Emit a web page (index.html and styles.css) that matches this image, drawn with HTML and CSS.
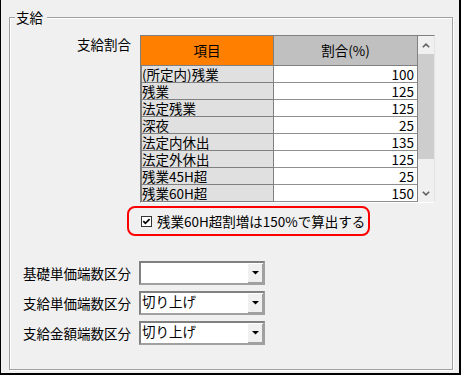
FILE: index.html
```html
<!DOCTYPE html>
<html lang="ja">
<head>
<meta charset="utf-8">
<title>支給</title>
<link rel="stylesheet" href="styles.css">
</head>
<body>
<div class="window">
  <div class="group">
    <div class="legend">支給</div>
    <div class="rate-row">
      <div class="rate-label">支給割合</div>
      <div class="tablebox">
        <div class="grid">
          <div class="row head">
            <div class="c1">項目</div>
            <div class="c2">割合(%)</div>
          </div>
          <div class="row"><div class="c1">(所定内)残業</div><div class="c2">100</div></div>
          <div class="row"><div class="c1">残業</div><div class="c2">125</div></div>
          <div class="row"><div class="c1">法定残業</div><div class="c2">125</div></div>
          <div class="row"><div class="c1">深夜</div><div class="c2">25</div></div>
          <div class="row"><div class="c1">法定内休出</div><div class="c2">135</div></div>
          <div class="row"><div class="c1">法定外休出</div><div class="c2">125</div></div>
          <div class="row"><div class="c1">残業45H超</div><div class="c2">25</div></div>
          <div class="row"><div class="c1">残業60H超</div><div class="c2">150</div></div>
        </div>
        <div class="vscroll">
          <div class="arrow"><svg width="8" height="5" viewBox="0 0 8 5"><polyline points="0.8,4.3 4,1.2 7.2,4.3" fill="none" stroke="#606060" stroke-width="1.6"/></svg></div>
          <div class="thumb"></div>
          <div class="track"></div>
          <div class="arrow"><svg width="8" height="5" viewBox="0 0 8 5"><polyline points="0.8,0.7 4,3.8 7.2,0.7" fill="none" stroke="#606060" stroke-width="1.6"/></svg></div>
        </div>
      </div>
    </div>
    <div class="chk">
      <span class="box"><svg width="9" height="9" viewBox="0 0 9 9"><polyline points="1.3,4.2 3.4,6.4 7.6,2.1" fill="none" stroke="#000" stroke-width="1.7"/></svg></span>
      <span class="chk-text">残業60H超割増は150%で算出する</span>
    </div>
    <div class="fields">
      <div class="field">
        <div class="lbl">基礎単価端数区分</div>
        <div class="combo"><div class="val"></div><div class="btn"><svg width="7" height="4" viewBox="0 0 7 4"><polygon points="0,0 7,0 3.5,3.6" fill="#000"/></svg></div></div>
      </div>
      <div class="field">
        <div class="lbl">支給単価端数区分</div>
        <div class="combo"><div class="val">切り上げ</div><div class="btn"><svg width="7" height="4" viewBox="0 0 7 4"><polygon points="0,0 7,0 3.5,3.6" fill="#000"/></svg></div></div>
      </div>
      <div class="field">
        <div class="lbl">支給金額端数区分</div>
        <div class="combo"><div class="val">切り上げ</div><div class="btn"><svg width="7" height="4" viewBox="0 0 7 4"><polygon points="0,0 7,0 3.5,3.6" fill="#000"/></svg></div></div>
      </div>
    </div>
  </div>
</div>
</body>
</html>
```

FILE: styles.css
```css
html, body {
  margin: 0;
  padding: 0;
  background: #f0f0f0;
}
body {
  font-family: "Noto Sans CJK JP", "Noto Sans", sans-serif;
  font-size: 13.5px;
  color: #000;
}
.window {
  width: 461px;
  height: 375px;
  box-sizing: border-box;
  border-left: 1px solid #000;
  border-right: 2px solid #000;
  border-bottom: 2px solid #000;
  padding-top: 17px;
}
.group {
  position: relative;
  margin-left: 8px;
  width: 444px;
  height: 353px;
  box-sizing: border-box;
  border: 1px solid #a0a0a0;
  box-shadow: 1px 1px 0 #fff, inset 1px 1px 0 #fff;
  padding-top: 17px;
}
.legend {
  position: absolute;
  top: -8px;
  left: 5px;
  line-height: 14px;
  padding: 0 4px 0 1px;
  background: #f0f0f0;
}
.rate-row {
  display: flex;
  align-items: flex-start;
}
.rate-label {
  width: 121px;
  margin-right: 9px;
  text-align: right;
  line-height: 16px;
  padding-top: 1px;
}
.tablebox {
  display: flex;
  border-top: 1px solid #808080;
  border-left: 1px solid #808080;
  border-right: 1px solid #e3e3e3;
  border-bottom: 1px solid #fff;
}
.grid {
  width: 277px;
}
.row {
  display: flex;
  height: 17px;
  line-height: 16px;
}
.row .c1 {
  width: 133px;
  box-sizing: border-box;
  background: #e0e0e0;
  border-left: 1px solid #808080;
  border-right: 1px solid #808080;
  border-bottom: 1px solid #808080;
  padding-left: 0;
  white-space: nowrap;
}
.row .c2 {
  width: 144px;
  box-sizing: border-box;
  background: #fff;
  border-right: 1px solid #808080;
  border-bottom: 1px solid #909090;
  text-align: right;
  padding-right: 3px;
}
.row.head {
  height: 30px;
  line-height: 29px;
}
.row.head .c1 {
  background: #ff8000;
  border-left: none;
  text-align: center;
}
.row.head .c2 {
  background: #c0c0c0;
  border-bottom-color: #808080;
  text-align: center;
  padding-right: 0;
}
.vscroll {
  width: 16px;
  display: flex;
  flex-direction: column;
  background: #f0f0f0;
}
.vscroll .arrow {
  height: 18px;
  display: flex;
  align-items: center;
  justify-content: center;
}
.vscroll .thumb {
  height: 105px;
  background: #cdcdcd;
}
.vscroll .track {
  flex: 1;
}
.vscroll .arrow:last-child {
  height: 17px;
}
.chk {
  margin-top: 3px;
  margin-left: 117px;
  width: 243px;
  height: 30px;
  box-sizing: border-box;
  border: 2px solid #ff0000;
  border-radius: 8px;
  display: flex;
  align-items: center;
  padding-left: 12px;
  gap: 5px;
}
.chk .box {
  width: 11px;
  height: 11px;
  box-sizing: border-box;
  border: 1px solid #333;
  background: #fff;
  display: flex;
  align-items: center;
  justify-content: center;
}
.chk-text {
  line-height: 16px;
  white-space: nowrap;
}
.fields {
  margin-top: 25px;
  display: flex;
  flex-direction: column;
  gap: 6px;
}
.field {
  display: flex;
  align-items: center;
}
.lbl {
  width: 121px;
  margin-right: 8px;
  text-align: right;
  line-height: 16px;
  white-space: nowrap;
}
.combo {
  width: 126px;
  height: 24px;
  box-sizing: border-box;
  border: 2px solid;
  border-color: #808080 #a0a0a0 #a0a0a0 #808080;
  background: #fff;
  display: flex;
}
.combo .val {
  flex: 1;
  line-height: 17px;
  padding-left: 1px;
}
.combo .btn {
  width: 16px;
  background: #f0f0f0;
  box-shadow: inset 1px 1px 0 #fff, inset -1px -1px 0 #a0a0a0;
  display: flex;
  align-items: center;
  justify-content: center;
}
```
